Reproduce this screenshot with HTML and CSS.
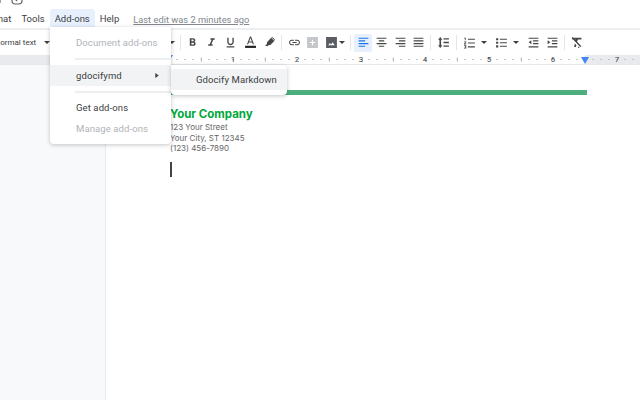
FILE: index.html
```html
<!DOCTYPE html>
<html lang="en">
<head>
  <meta charset="UTF-8" />
  <title>Your Company - Google Docs</title>
  <link rel="stylesheet" href="styles.css">
</head>
<body>
  <div class="titlebar">
    <svg class="title-icon" viewBox="0 0 12 12"><path d="M-11-6v9"/><rect x="1" y="-6" width="10" height="10" rx="3"/><path d="M4-1l1.5 1.5L8-3"/></svg>
  </div>

  <div class="menubar">
    <span class="menu-item">Format</span>
    <span class="menu-item">Tools</span>
    <span class="menu-item menu-open">Add-ons</span>
    <span class="menu-item">Help</span>
    <span class="last-edit">Last edit was 2 minutes ago</span>
  </div>

  <div class="toolbar">
    <span class="style-select">Normal text</span>
    <svg class="caret" viewBox="0 0 8 4"><path d="M0 0h8L4 4z"/></svg>
    <svg class="caret caret-font" viewBox="0 0 8 4"><path d="M0 0h8L4 4z"/></svg>
    <span class="sep"></span>
    <span class="tool tool-text"><svg viewBox="0 0 24 24"><path d="M15.6 10.79c.97-.67 1.65-1.77 1.65-2.79 0-2.26-1.75-4-4-4H7v14h7.04c2.09 0 3.71-1.7 3.71-3.79 0-1.52-.86-2.82-2.15-3.42zM10 6.5h3c.83 0 1.5.67 1.5 1.5s-.67 1.5-1.5 1.5h-3v-3zm3.5 9H10v-3h3.5c.83 0 1.5.67 1.5 1.5s-.67 1.5-1.5 1.5z"/></svg></span>
    <span class="tool tool-text"><svg viewBox="0 0 24 24"><path d="M10 4v3h2.21l-3.42 8H6v3h8v-3h-2.21l3.42-8H18V4z"/></svg></span>
    <span class="tool tool-text"><svg viewBox="0 0 24 24"><path d="M12 17c3.31 0 6-2.69 6-6V3h-2.5v8c0 1.93-1.57 3.5-3.5 3.5S8.5 12.93 8.5 11V3H6v8c0 3.31 2.69 6 6 6zm-7 2v2h14v-2H5z"/></svg></span>
    <span class="tool tool-text"><svg viewBox="0 0 24 24"><path d="M11 1L5.5 15h2.25l1.12-3h6.25l1.12 3h2.25L13 1h-2zm-1.38 9L12 3.67 14.38 10H9.62z"/><path class="ink" d="M2 18h20v4H2z"/></svg></span>
    <span class="tool tool-text"><svg viewBox="0 0 24 24"><path d="M15 3l6 6-8 8-2-.5-3 2.5-4-1 3.500-3.500-.5-2.500z"/><path d="M16.500 1.500l6 6-1 1-6-6z"/></svg></span>
    <span class="sep"></span>
    <span class="tool"><svg viewBox="0 0 24 24"><path d="M3.900 12c0-1.710 1.390-3.100 3.100-3.100h4V7H7c-2.760 0-5 2.240-5 5s2.240 5 5 5h4v-1.900H7c-1.710 0-3.100-1.390-3.100-3.100zM8 13h8v-2H8v2zm9-6h-4v1.900h4c1.710 0 3.100 1.390 3.100 3.100s-1.390 3.100-3.100 3.100h-4V17h4c2.760 0 5-2.240 5-5s-2.240-5-5-5z"/></svg></span>
    <span class="tool tool-off"><svg viewBox="0 0 24 24"><path d="M2 2h20v20H2zM11 7v4H7v2h4v4h2v-4h4v-2h-4V7z" fill-rule="evenodd"/></svg></span>
    <span class="tool tool-image"><svg viewBox="0 0 24 24"><path d="M2 2h20v20H2zM6 17h12l-4-5.500-3 4-2-2.500z" fill-rule="evenodd"/></svg></span>
    <svg class="caret caret-tool caret-image" viewBox="0 0 8 4"><path d="M0 0h8L4 4z"/></svg>
    <span class="sep"></span>
    <span class="tool tool-active"><svg viewBox="0 0 24 24"><path d="M3 3h18v2H3zM3 8h12v2H3zM3 13h18v2H3zM3 18h12v2H3z"/></svg></span>
    <span class="tool"><svg viewBox="0 0 24 24"><path d="M3 3h18v2H3zM7 8h10v2H7zM3 13h18v2H3zM7 18h10v2H7z"/></svg></span>
    <span class="tool"><svg viewBox="0 0 24 24"><path d="M3 3h18v2H3zM9 8h12v2H9zM3 13h18v2H3zM9 18h12v2H9z"/></svg></span>
    <span class="tool"><svg viewBox="0 0 24 24"><path d="M3 3h18v2H3zM3 8h18v2H3zM3 13h18v2H3zM3 18h18v2H3z"/></svg></span>
    <span class="sep"></span>
    <span class="tool tool-spacing"><svg viewBox="0 0 24 24"><path d="M6 2l4 5H7.500v10H10l-4 5-4-5h2.500V7H2zM12 4h10v2.500H12zM12 10.750h10v2.500H12zM12 17.500h10V20H12z"/></svg></span>
    <span class="sep"></span>
    <span class="tool"><svg viewBox="0 0 24 24"><path d="M2 3h3v5H3.500V4.500H2zM2 10h4v1.500l-2.500 2.500H6v1.500H2V14l2.500-2.500H2zM2 17h4v6H2v-1.500h2.500v-.75H3v-1.500h1.500v-.75H2zM9 5h13v2H9zM9 12h13v2H9zM9 19h13v2H9z"/></svg></span>
    <svg class="caret caret-tool" viewBox="0 0 8 4"><path d="M0 0h8L4 4z"/></svg>
    <span class="tool tool-bullets"><svg viewBox="0 0 24 24"><path d="M2 4h4v4H2zM2 10.500h4v4H2zM2 17h4v4H2zM9 5h13v2H9zM9 11.500h13v2H9zM9 18h13v2H9z"/></svg></span>
    <svg class="caret caret-tool" viewBox="0 0 8 4"><path d="M0 0h8L4 4z"/></svg>
    <span class="tool tool-outdent"><svg viewBox="0 0 24 24"><path d="M3 3h18v2H3zM11 8h10v2H11zM11 13h10v2H11zM3 19h18v2H3zM8 8v7l-5-3.500z"/></svg></span>
    <span class="tool"><svg viewBox="0 0 24 24"><path d="M3 3h18v2H3zM11 8h10v2H11zM11 13h10v2H11zM3 19h18v2H3zM3 8v7l5-3.500z"/></svg></span>
    <span class="sep"></span>
    <span class="tool"><svg viewBox="0 0 24 24"><path d="M4 3h17v3.500h-6.500L13 11l-3-2.500 .75-2H4zM3 3.500L5 2l16 17-2 1.500zM9 14l2.800 3-1 3.500H7.500zM15 20h2v2h-2z"/></svg></span>
  </div>

  <div class="ruler">
    <div class="ruler-margin"></div>
    <div class="ruler-track">
      <span>1</span><span>2</span><span>3</span><span>4</span><span>5</span><span>6</span><span>7</span>
    </div>
    <svg class="marker marker-left" viewBox="0 0 8 7"><path d="M0 0h8L4 7z"/></svg>
    <svg class="marker marker-right" viewBox="0 0 8 7"><path d="M0 0h8L4 7z"/></svg>
  </div>

  <div class="workspace">
    <div class="sidebar"></div>
    <div class="page">
      <div class="rule"></div>
      <h1>Your Company</h1>
      <p>123 Your Street</p>
      <p>Your City, ST 12345</p>
      <p>(123) 456-7890</p>
      <div class="cursor"></div>
    </div>
  </div>

  <div class="dropdown">
    <div class="drop-item drop-off">Document add-ons</div>
    <div class="divider"></div>
    <div class="drop-item drop-hover">gdocifymd<svg class="arrow" viewBox="0 0 4 6"><path d="M0 0l4 3-4 3z"/></svg></div>
    <div class="divider divider-tight"></div>
    <div class="drop-item">Get add-ons</div>
    <div class="drop-item drop-off">Manage add-ons</div>
  </div>

  <div class="submenu">
    <div class="sub-item">Gdocify Markdown</div>
  </div>
</body>
</html>
```

FILE: styles.css
```css
html, body {
  height: 100%;
}

body {
  margin: 0;
  overflow: hidden;
  position: relative;
  display: flex;
  flex-direction: column;
  font-family: Roboto, sans-serif;
  font-size: 9.5px;
  color: #3c4043;
  background-color: #fff;
}

.titlebar {
  height: 9px;
  padding-left: 11px;
  overflow: hidden;
  flex: none;
}

.title-icon {
  display: block;
  width: 12px;
  height: 12px;
  fill: none;
  stroke: #5f6368;
  stroke-width: 1.2;
  overflow: visible;
}

.menubar {
  display: flex;
  align-items: center;
  height: 19px;
  margin-left: -24px;
  flex: none;
}

.menu-item {
  padding: 0 5px;
  line-height: 20px;
  height: 19px;
  border-radius: 3px 3px 0 0;
}

.menu-open {
  background-color: #e8f0fe;
}

.last-edit {
  margin-left: 9px;
  padding-top: 1px;
  font-size: 9.3px;
  color: #80868b;
  text-decoration: underline;
}

.toolbar {
  display: flex;
  align-items: center;
  height: 25px;
  flex: none;
  border-top: 2px solid #eceef0;
}

.style-select {
  margin-left: -5.5px;
  width: 49.5px;
  font-size: 8px;
  white-space: nowrap;
  flex: none;
}

.caret {
  width: 6px;
  height: 3px;
  fill: #3c4043;
  flex: none;
}

.caret-font {
  margin-left: 119px;
  margin-right: 2px;
}

.caret-tool {
  margin: 0 3px;
}

.caret-image {
  margin-left: -1.5px;
}

.sep {
  width: 1px;
  height: 15px;
  margin: 0 2.5px;
  background-color: #e3e5e8;
  flex: none;
}

.tool {
  display: flex;
  align-items: center;
  justify-content: center;
  width: 18.5px;
  height: 18px;
  border-radius: 2px;
  flex: none;
}

.tool svg {
  width: 13px;
  height: 13px;
  fill: #444746;
}

.tool .ink {
  fill: #202124;
}

.tool-text {
  width: 19.2px;
}

.tool-off svg {
  fill: #c4c7ca;
}

.tool-image svg {
  fill: #5a5d61;
}

.tool-active {
  background-color: #e8f0fe;
}

.tool-active svg {
  fill: #1a73e8;
}

.tool-spacing {
  margin: 0 0.75px;
}

.tool-bullets {
  margin-left: 1.5px;
}

.tool-outdent {
  margin-left: 2px;
}

.ruler {
  position: relative;
  display: flex;
  height: 9px;
  flex: none;
  border-bottom: 1px solid #e6e8ea;
  font-size: 8px;
  line-height: 10px;
}

.ruler-margin {
  width: 170px;
  background-color: #e8eaed;
  flex: none;
}

.ruler-track {
  display: flex;
  flex: 1;
  padding-left: 31px;
  background:
    linear-gradient(to right, #c4c7ca 1px, transparent 1px) 31px 2px / 64px 5px repeat-x,
    radial-gradient(circle at 4px 50%, #c4c7ca 0.5px, transparent 1px) 3px 0 / 8px 9px,
    linear-gradient(to right, #fff 415px, #e8eaed 415px);
}

.ruler-track span {
  width: 64px;
  text-align: center;
  flex: none;
}

.marker {
  position: absolute;
  top: 2px;
  width: 8px;
  height: 7px;
  fill: #4285f4;
}

.marker-left {
  left: 167px;
  width: 6px;
  height: 5px;
  top: 0;
}

.marker-right {
  left: 581px;
}

.workspace {
  display: flex;
  flex: 1;
}

.sidebar {
  width: 105px;
  background-color: #f8f9fa;
  border-right: 1px solid #e8eaed;
  flex: none;
}

.page {
  flex: 1;
  padding: 25px 53px 0 64px;
  font-family: Inter, sans-serif;
  font-size: 8px;
  line-height: 10.5px;
  color: #666;
}

.rule {
  height: 5px;
  background-color: #4caf7d;
}

h1 {
  margin: 12px 0 0;
  font-size: 11.5px;
  line-height: 15px;
  color: #00a83c;
}

p {
  margin: 0;
}

.cursor {
  width: 2px;
  height: 15px;
  margin-top: 8px;
  background-color: #444;
}

.dropdown {
  position: absolute;
  left: 50px;
  top: 27px;
  width: 121px;
  height: 117px;
  padding-top: 5px;
  box-sizing: border-box;
  background-color: #fff;
  border-radius: 0 0 4px 4px;
  box-shadow: 0 1px 4px rgba(60, 64, 67, 0.3);
}

.drop-item {
  display: flex;
  align-items: center;
  justify-content: space-between;
  height: 21px;
  padding: 0 12px 0 26px;
  letter-spacing: 0.1px;
  white-space: nowrap;
}

.drop-off {
  color: #b0b3b8;
}

.drop-hover {
  background-color: #f1f3f4;
}

.divider {
  height: 2px;
  margin: 5px 0 5px 25px;
  background-color: #eceef0;
}

.divider-tight {
  margin-bottom: 4px;
}

.arrow {
  width: 4px;
  height: 5px;
  fill: #3c4043;
}

.submenu {
  position: absolute;
  left: 171px;
  top: 65px;
  width: 116px;
  height: 30px;
  padding-top: 4px;
  box-sizing: border-box;
  background-color: #fff;
  border-radius: 0 4px 4px 4px;
  box-shadow: 0 1px 4px rgba(60, 64, 67, 0.3);
}

.sub-item {
  height: 21px;
  padding-left: 25px;
  line-height: 22px;
  letter-spacing: 0.1px;
  white-space: nowrap;
  background-color: #f1f3f4;
}
```
